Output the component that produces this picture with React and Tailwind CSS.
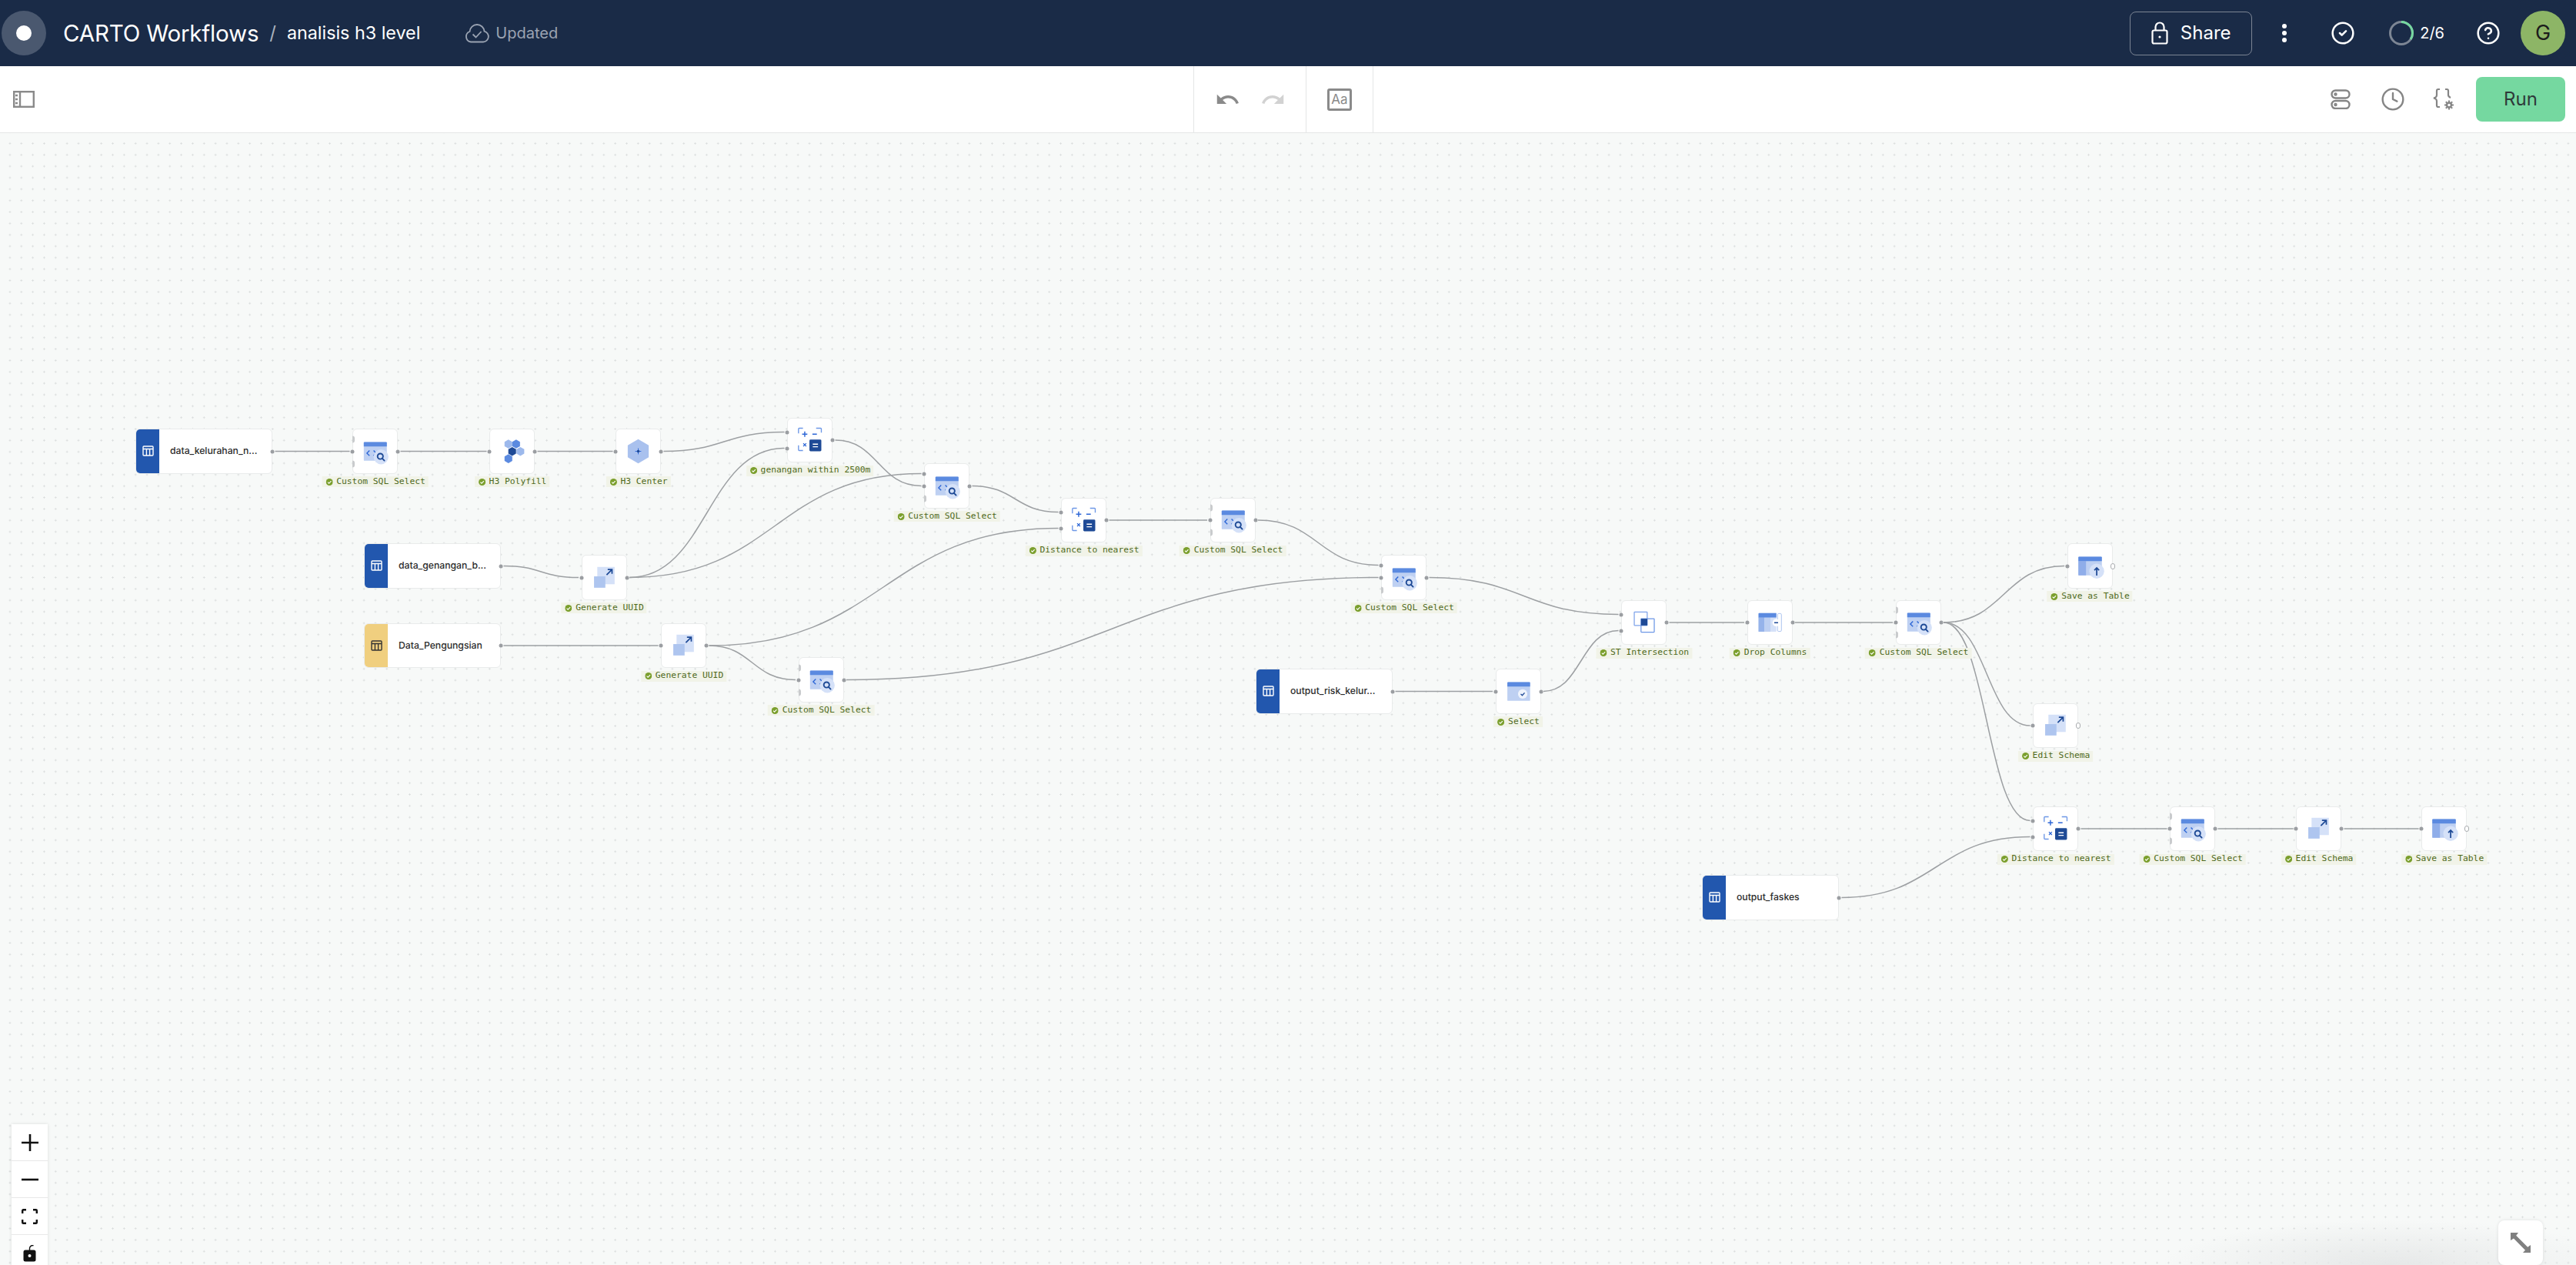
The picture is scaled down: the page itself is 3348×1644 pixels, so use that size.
import { CircleCheck, CircleHelp, Clock } from "lucide-react";

const CANVAS_TOP = 173;
const BLUE = "#2c66d6";
const DARK = "#1e4a96";
const MID = "#5b8ae0";
const BODY = "#bed0f2";
const PALE = "#d5e1f8";

// coordenadas en px de la pagina
const NODES = {
  a: { x: 176, y: 557, source: "blue", name: "data_kelurahan_n..." },
  b: { x: 458, y: 557, icon: "sql", label: "Custom SQL Select", used: [1] },
  c: { x: 636, y: 557, icon: "polyfill", label: "H3 Polyfill" },
  d: { x: 800, y: 557, icon: "center", label: "H3 Center" },
  e: { x: 473, y: 706, source: "blue", name: "data_genangan_b..." },
  f: { x: 755.5, y: 721, icon: "schema", label: "Generate UUID" },
  g: { x: 473, y: 809.5, source: "yellow", name: "Data_Pengungsian" },
  h: { x: 1023, y: 542.5, icon: "dist", label: "genangan within 2500m" },
  i: { x: 1201, y: 602, icon: "sql", label: "Custom SQL Select", used: [0, 1] },
  j: { x: 1379, y: 646.5, icon: "dist", label: "Distance to nearest" },
  k: { x: 859, y: 809.5, icon: "schema", label: "Generate UUID" },
  l: { x: 1037.5, y: 854, icon: "sql", label: "Custom SQL Select", used: [1] },
  m: { x: 1572.5, y: 646.5, icon: "sql", label: "Custom SQL Select", used: [1] },
  n: { x: 1795, y: 721, icon: "sql", label: "Custom SQL Select", used: [0, 1] },
  o: { x: 2107, y: 779.5, icon: "st", label: "ST Intersection" },
  p: { x: 1632, y: 869, source: "blue", name: "output_risk_kelur..." },
  q: { x: 1943.5, y: 869, icon: "select", label: "Select" },
  r: { x: 2270.5, y: 779.5, icon: "drop", label: "Drop Columns" },
  s: { x: 2463.5, y: 779.5, icon: "sql", label: "Custom SQL Select", used: [1] },
  t: { x: 2686.5, y: 706, icon: "save", label: "Save as Table", end: true },
  u: { x: 2642, y: 913.5, icon: "schema", label: "Edit Schema", end: true },
  v: { x: 2642, y: 1047.5, icon: "dist", label: "Distance to nearest" },
  w: { x: 2820, y: 1047.5, icon: "sql", label: "Custom SQL Select", used: [1] },
  x: { x: 2984, y: 1047.5, icon: "schema", label: "Edit Schema" },
  y: { x: 3147, y: 1047.5, icon: "save", label: "Save as Table", end: true },
  z: { x: 2212, y: 1137, source: "blue", name: "output_faskes" },
};

const EDGES = [
  ["a", "b", 1], ["b", "c", 0], ["c", "d", 0], ["d", "h", 0], ["f", "h", 1], ["f", "i", 0],
  ["h", "i", 1], ["i", "j", 0], ["k", "j", 1], ["e", "f", 0], ["g", "k", 0], ["k", "l", 1],
  ["l", "n", 1], ["j", "m", 1], ["m", "n", 0], ["n", "o", 0], ["q", "o", 1], ["p", "q", 0],
  ["o", "r", 0], ["r", "s", 1], ["s", "t", 0], ["s", "u", 0], ["s", "v", 0], ["z", "v", 1],
  ["v", "w", 1], ["w", "x", 0], ["x", "y", 0],
];

function inputOffsets(node) {
  if (node.icon === "sql") return [13.5, 29.5, 45.5];
  if (node.icon === "dist" || node.icon === "st") return [19, 40];
  return [29.5];
}

function edgePath([from, to, input]) {
  const s = NODES[from];
  const t = NODES[to];
  const sx = s.x + (s.source ? 178 : 59) + 3.5;
  const sy = s.y + 29.5;
  const tx = t.x - 3.5;
  const ty = t.y + inputOffsets(t)[input];
  const c = Math.abs(tx - sx) * 0.5;
  return `M${sx} ${sy} C${sx + c} ${sy} ${tx - c} ${ty} ${tx} ${ty}`;
}

function Hex({ cx, cy, r, fill }) {
  const w = r * 0.866;
  return <polygon fill={fill} points={`${cx},${cy - r} ${cx + w},${cy - r / 2} ${cx + w},${cy + r / 2} ${cx},${cy + r} ${cx - w},${cy + r / 2} ${cx - w},${cy - r / 2}`} />;
}

function NodeIcon({ name }) {
  return (
    <svg width="59" height="59" viewBox="0 0 59 59" fill="none">
      {name === "sql" && (
        <>
          <rect x="14.3" y="17" width="31" height="25.3" rx="1" fill={BODY} />
          <path d="M14.3 18a1 1 0 0 1 1-1h29a1 1 0 0 1 1 1v5H14.3z" fill={MID} />
          <path d="M22 28.5l-3.500 3.500 3.500 3.500M27.500 28.500l3.500 3.500-3.500 3.500" stroke={BLUE} strokeWidth="1.4" />
          <circle cx="37.500" cy="37" r="10" fill={PALE} />
          <circle cx="36.500" cy="36.300" r="3.700" stroke={DARK} strokeWidth="2" />
          <path d="M39 39l3 3" stroke={DARK} strokeWidth="2" strokeLinecap="round" />
        </>
      )}
      {name === "polyfill" && (
        <>
          <Hex cx={24.6} cy={19.7} r={6} fill="#9db9ec" />
          <Hex cx={35} cy={19.7} r={6} fill={MID} />
          <Hex cx={40.7} cy={29.7} r={6} fill="#9db9ec" />
          <Hex cx={24.6} cy={39.5} r={6} fill={MID} />
          <Hex cx={29.7} cy={29.7} r={6} fill={DARK} />
        </>
      )}
      {name === "center" && (
        <>
          <Hex cx={29.5} cy={29.5} r={16.3} fill="#a9c1ee" />
          <path d="M29.500 25.500v8M25.500 29.500h8" stroke={BLUE} strokeWidth="1" />
          <rect x="28" y="28" width="3" height="3" fill={DARK} />
        </>
      )}
      {name === "schema" && (
        <>
          <rect x="20" y="15.300" width="23.300" height="23.300" fill={PALE} />
          <rect x="15.600" y="28" width="15.200" height="15.300" fill="#aec5ef" />
          <path d="M32.500 26l7-7M34 18.700h5.800v5.800" stroke={DARK} strokeWidth="1.8" />
        </>
      )}
      {name === "dist" && (
        <>
          <path d="M14.300 21v-6a1 1 0 0 1 1-1h5M38 14h6a1 1 0 0 1 1 1v5M14.300 37v6a1 1 0 0 0 1 1h5" stroke="#6d97e6" strokeWidth="1.4" />
          <path d="M22.700 18.500v7M19.200 22h7M33 22h6" stroke={BLUE} strokeWidth="1.5" />
          <path d="M20.700 34.300l4 4M24.700 34.300l-4 4" stroke={BLUE} strokeWidth="1.3" />
          <rect x="29" y="29.300" width="16" height="15.700" rx="1.500" fill={DARK} />
          <path d="M33.500 35.500h7M33.500 39h7" stroke="#fff" strokeWidth="1.4" />
        </>
      )}
      {name === "st" && (
        <>
          <rect x="16.600" y="16" width="17.400" height="18" rx="0.500" stroke="#7ea3ea" strokeWidth="1.3" />
          <rect x="25.700" y="25" width="17.800" height="18" rx="0.500" stroke="#6d97e6" strokeWidth="1.3" />
          <rect x="25.700" y="25" width="8.500" height="9" fill={DARK} />
        </>
      )}
      {name === "select" && (
        <>
          <rect x="14.600" y="17" width="30.600" height="25.300" rx="1" fill={BODY} />
          <path d="M14.600 18a1 1 0 0 1 1-1h28.600a1 1 0 0 1 1 1v5H14.600z" fill={MID} />
          <circle cx="35.200" cy="33" r="6.300" fill="#eef3fc" />
          <path d="M32.600 33l2 2 3.200-3.600" stroke={DARK} strokeWidth="1.4" />
        </>
      )}
      {name === "save" && (
        <>
          <rect x="13.700" y="17" width="31.600" height="25.300" rx="1" fill={BODY} />
          <path d="M13.700 23h10.300v19.300H14.700a1 1 0 0 1-1-1z" fill="#8fade9" />
          <path d="M13.700 18a1 1 0 0 1 1-1h29.600a1 1 0 0 1 1 1v5H13.700z" fill={MID} />
          <circle cx="38.400" cy="36.500" r="10" fill={PALE} />
          <path d="M38.400 42.500v-10M35.200 35.300l3.200-3.300 3.200 3.300" stroke={DARK} strokeWidth="1.8" />
        </>
      )}
      {name === "drop" && (
        <>
          <rect x="14" y="17.400" width="24" height="25" rx="1" fill={PALE} />
          <rect x="14" y="23" width="8" height="19.400" fill="#96b3ea" />
          <rect x="22" y="23" width="8" height="19.400" fill={BODY} />
          <path d="M14 18.400a1 1 0 0 1 1-1h23v5.800H14z" fill={MID} />
          <rect x="39.600" y="18" width="5.200" height="24" rx="1.500" fill="#fff" stroke="#a9c1ee" strokeWidth="1" />
          <circle cx="37.800" cy="30.300" r="5" fill="#fff" />
          <path d="M35.200 30.300h5.200" stroke={DARK} strokeWidth="1.6" />
        </>
      )}
    </svg>
  );
}

function TableIcon({ color }) {
  return (
    <svg width="15" height="14" viewBox="0 0 15 14" fill="none" stroke={color} strokeWidth="1.4">
      <rect x="1" y="1" width="13" height="12" rx="1" />
      <path d="M1 4.500h13M5.400 4.500V13M9.600 4.500V13" />
    </svg>
  );
}

function CheckDot() {
  return (
    <svg width="9" height="9" viewBox="0 0 9 9" className="shrink-0">
      <circle cx="4.500" cy="4.500" r="4.500" fill="#7b9f2d" />
      <path d="M2.300 4.600l1.600 1.600 2.900-3.100" stroke="#fff" strokeWidth="1.1" fill="none" />
    </svg>
  );
}

function Dot({ left, top }) {
  return <span className="absolute w-[5px] h-[5px] rounded-full bg-[#9b9ea2] -translate-x-1/2 -translate-y-1/2" style={{ left, top }} />;
}

function SquareNode({ node }) {
  const offsets = inputOffsets(node);
  const used = node.used ?? offsets.map((_, i) => i);
  return (
    <div className="absolute w-[59px] h-[58.5px]" style={{ left: node.x, top: node.y - CANVAS_TOP }}>
      <div className="w-full h-full bg-white rounded-[6px] border border-[#e9ebeb] flex items-center justify-center">
        <NodeIcon name={node.icon} />
      </div>
      {offsets.map((top, i) =>
        used.includes(i) ? (
          <Dot key={i} left={0} top={top} />
        ) : (
          <span key={i} className="absolute left-0 w-[3px] h-[9px] rounded-r-full bg-[#c9cbcd] -translate-y-1/2" style={{ top }} />
        ),
      )}
      {node.end ? (
        <span className="absolute left-[59px] top-[29.5px] w-[6px] h-[8px] rounded-full border border-[#a9acaf] bg-white -translate-x-1/2 -translate-y-1/2" />
      ) : (
        <Dot left={59} top={29.5} />
      )}
      <div className="absolute top-[62px] left-1/2 -translate-x-1/2 h-[14px] pl-[5px] pr-[4px] flex items-center gap-[5px] bg-[#f1f3e8] whitespace-nowrap font-['DejaVu_Sans_Mono',monospace] text-[11.3px] text-[#4f6a1c]">
        <CheckDot />
        <span>{node.label}</span>
      </div>
    </div>
  );
}

function SourceNode({ node }) {
  const yellow = node.source === "yellow";
  return (
    <div className="absolute w-[178px] h-[58.5px]" style={{ left: node.x, top: node.y - CANVAS_TOP }}>
      <div className="w-full h-full flex bg-white rounded-[6px] border border-[#e9ebeb] overflow-hidden">
        <div className={`w-[30px] flex items-center justify-center ${yellow ? "bg-[#f0cf7f]" : "bg-[#2257ae]"}`}>
          <TableIcon color={yellow ? "#333333" : "#ffffff"} />
        </div>
        <div className="flex items-center pl-[14px] font-['Inter',sans-serif] font-medium text-[12.2px] text-[#2c2c2c] whitespace-nowrap">{node.name}</div>
      </div>
      <Dot left={178} top={29.5} />
    </div>
  );
}

function Header() {
  return (
    <header className="h-[86px] shrink-0 bg-[#1a2b47] flex items-center font-['Inter',sans-serif] text-white">
      <div className="ml-[2px] w-[58px] h-[58px] rounded-full bg-[#4a586f] flex items-center justify-center">
        <div className="w-[20px] h-[20px] rounded-full bg-white" />
      </div>
      <span className="ml-[22px] text-[29.5px] tracking-[-0.2px]">CARTO Workflows</span>
      <span className="ml-[14px] text-[24px] text-[#aab2be]">/</span>
      <span className="ml-[14px] text-[23.3px]">analisis h3 level</span>
      <svg className="ml-[57px]" width="34" height="26" viewBox="0 0 34 26" fill="none" stroke="#9aa3b2" strokeWidth="1.8">
        <path d="M9 24.500h16a7 7 0 0 0 1.500-13.800A9.500 9.500 0 0 0 17 2a9.500 9.500 0 0 0-9.500 9A7 7 0 0 0 9 24.500z" />
        <path d="M11.500 14.500l4 4 7-7.500" />
      </svg>
      <span className="ml-[7px] text-[20px] text-[#9aa3b2]">Updated</span>

      <div className="ml-auto w-[159px] h-[57px] rounded-[8px] border border-[#7b8493] flex items-center justify-center gap-[16px]">
        <svg width="22" height="30" viewBox="0 0 22 30" fill="none" stroke="#fff" strokeWidth="2.2">
          <rect x="1.500" y="11.500" width="19" height="17" rx="2" />
          <path d="M5.500 11.500V7a5.500 5.500 0 0 1 11 0v4.500" />
          <circle cx="11" cy="20" r="1.600" fill="#fff" stroke="none" />
        </svg>
        <span className="text-[24px]">Share</span>
      </div>
      <svg className="ml-[38px]" width="8" height="26" viewBox="0 0 8 26" fill="#fff">
        <circle cx="4" cy="4" r="3" />
        <circle cx="4" cy="13" r="3" />
        <circle cx="4" cy="22" r="3" />
      </svg>
      <CircleCheck className="ml-[56px]" size={32} strokeWidth={1.9} />
      <svg className="ml-[44px]" width="32" height="32" viewBox="0 0 32 32" fill="none" strokeWidth="3">
        <circle cx="16" cy="16" r="14.500" stroke="#7d8694" />
        <path d="M16 1.500a14.500 14.500 0 0 1 14.500 14.500c0 3-1 6-2.500 8" stroke="#75d8a0" />
      </svg>
      <span className="ml-[8px] text-[20px]">2/6</span>
      <CircleHelp className="ml-[41px]" size={32} strokeWidth={1.9} />
      <div className="ml-[26px] mr-[14px] w-[58px] h-[58px] rounded-full bg-[#8db566] flex items-center justify-center text-[27px] text-[#1c1c1c]">G</div>
    </header>
  );
}

function Toolbar() {
  return (
    <div className="h-[87px] shrink-0 bg-white border-b border-[#e4e6e6] flex items-stretch font-['Inter',sans-serif]">
      <div className="w-[1551px] flex items-center pl-[17px]">
        <svg width="28" height="22" viewBox="0 0 28 22" fill="none">
          <rect x="1.200" y="1.200" width="25.600" height="19.600" stroke="#8a8a8a" strokeWidth="2.4" />
          <path d="M9 1v20" stroke="#8a8a8a" strokeWidth="2.4" />
          <path d="M3 6h3M3 11h3M3 16h3" stroke="#8a8a8a" strokeWidth="2.4" />
        </svg>
      </div>
      <div className="w-[146px] border-l border-[#e4e6e6] flex items-center pl-[27px] gap-[26px]">
        <svg width="33" height="33" viewBox="0 0 24 24" fill="#8a8a8a">
          <path d="M12.500 8c-2.650 0-5.050.99-6.900 2.600L2 7v9h9l-3.620-3.620c1.390-1.160 3.160-1.880 5.120-1.880 3.540 0 6.550 2.310 7.600 5.500l2.370-.78C21.080 11.030 17.150 8 12.500 8z" />
        </svg>
        <svg width="33" height="33" viewBox="0 0 24 24" fill="#d2d2d2">
          <path d="M18.400 10.600C16.550 8.990 14.150 8 11.500 8c-4.650 0-8.580 3.030-9.960 7.220L3.900 16c1.050-3.190 4.050-5.500 7.600-5.500 1.950 0 3.730.72 5.120 1.880L13 16h9V7l-3.600 3.600z" />
        </svg>
      </div>
      <div className="w-[88px] border-x border-[#e4e6e6] flex items-center justify-center">
        <div className="w-[32px] h-[29px] border-[3px] border-[#8a8a8a] rounded-[3px] flex items-center justify-center text-[17px] leading-none text-[#8a8a8a]">Aa</div>
      </div>
      <div className="ml-auto flex items-center">
        <svg width="26" height="26" viewBox="0 0 26 26" fill="none" stroke="#858585" strokeWidth="2.4">
          <rect x="1.500" y="1.500" width="23" height="10" rx="5" />
          <rect x="1.500" y="15" width="23" height="10" rx="5" />
          <circle cx="6.500" cy="6.500" r="1" />
          <circle cx="6.500" cy="20" r="1" />
        </svg>
        <Clock className="ml-[39px]" size={32} strokeWidth={1.8} color="#858585" />
        <svg className="ml-[35px]" width="30" height="30" viewBox="0 0 30 30" fill="none" stroke="#858585" strokeWidth="2.2">
          <path d="M10 2H8a2 2 0 0 0-2 2v5.500c0 2-1.500 3.500-4 4 2.500.5 4 2 4 4V23a2 2 0 0 0 2 2h2" />
          <path d="M17 2h2a2 2 0 0 1 2 2v5.500c0 1.500 1 2.500 3 3.500" />
          <circle cx="22" cy="22.500" r="3" strokeWidth="2.400" />
          <path d="M22 16.500v2.200M22 26.300v2.200M16 22.500h2.200M25.800 22.500H28M17.800 18.300l1.500 1.500M24.700 25.200l1.500 1.500M17.800 26.700l1.500-1.500M24.700 19.800l1.500-1.500" strokeWidth="2" />
        </svg>
        <button className="ml-[27px] mr-[14px] w-[116px] h-[58px] rounded-[8px] bg-[#75d8a0] text-[24px] text-[#2f3a3a]">Run</button>
      </div>
    </div>
  );
}

function ZoomControls() {
  const cell = "h-[48px] flex items-center justify-center border-b border-[#e8e8e8]";
  return (
    <div className="absolute left-[15px] top-[1288px] w-[47px] bg-white shadow-[0_0_4px_rgba(0,0,0,0.12)]">
      <div className={cell}>
        <svg width="22" height="22" viewBox="0 0 22 22" stroke="#111" strokeWidth="2.6"><path d="M11 0v22M0 11h22" /></svg>
      </div>
      <div className={cell}>
        <svg width="22" height="22" viewBox="0 0 22 22" stroke="#111" strokeWidth="2.6"><path d="M0 11h22" /></svg>
      </div>
      <div className={cell}>
        <svg width="21" height="20" viewBox="0 0 21 20" fill="none" stroke="#111" strokeWidth="2.4">
          <path d="M1.200 6V2.200a1 1 0 0 1 1-1H6M15 1.200h3.800a1 1 0 0 1 1 1V6M1.200 14v3.800a1 1 0 0 0 1 1H6M15 18.800h3.800a1 1 0 0 0 1-1V14" />
        </svg>
      </div>
      <div className={cell}>
        <svg width="17" height="22" viewBox="0 0 17 22">
          <path d="M8.500 7V4.500a4 4 0 0 1 5-3.800" fill="none" stroke="#111" strokeWidth="1.400" />
          <rect x="0.500" y="6.500" width="16" height="15" rx="2.500" fill="#111" />
          <circle cx="8.500" cy="14" r="2" fill="#fff" />
        </svg>
      </div>
    </div>
  );
}

export default function App() {
  return (
    <div className="h-screen flex flex-col overflow-hidden">
      <Header />
      <Toolbar />
      <main className="relative flex-1 bg-[#f7f9f8] bg-[radial-gradient(circle,#d9dcdc_0.9px,transparent_1.3px)] bg-[length:14.85px_14.85px] bg-[position:5.5px_6px]">
        <div className="absolute -right-[60px] bottom-0 w-[600px] h-[60px] bg-[radial-gradient(ellipse_at_bottom,#e6e8e8_0%,transparent_70%)]" />
        <svg className="absolute inset-0 w-full h-full" viewBox={`0 ${CANVAS_TOP} 3348 1471`} fill="none">
          {EDGES.map((edge) => (
            <path key={edge[0] + edge[1]} d={edgePath(edge)} stroke="#9da0a3" strokeWidth="1.5" />
          ))}
        </svg>
        {Object.entries(NODES).map(([id, node]) =>
          node.source ? <SourceNode key={id} node={node} /> : <SquareNode key={id} node={node} />,
        )}
        <ZoomControls />
        <div className="absolute right-[43px] top-[1413px] w-[58px] h-[58px] rounded-[8px] bg-white shadow-[0_0_4px_rgba(0,0,0,0.1)] flex items-center justify-center">
          <svg width="26" height="26" viewBox="0 0 26 26" fill="#808080">
            <path d="M0 0h10L7.200 3.800 22.200 18.800 26 16v10H16l3-3.200L4 7.400 0 10z" />
          </svg>
        </div>
      </main>
    </div>
  );
}
